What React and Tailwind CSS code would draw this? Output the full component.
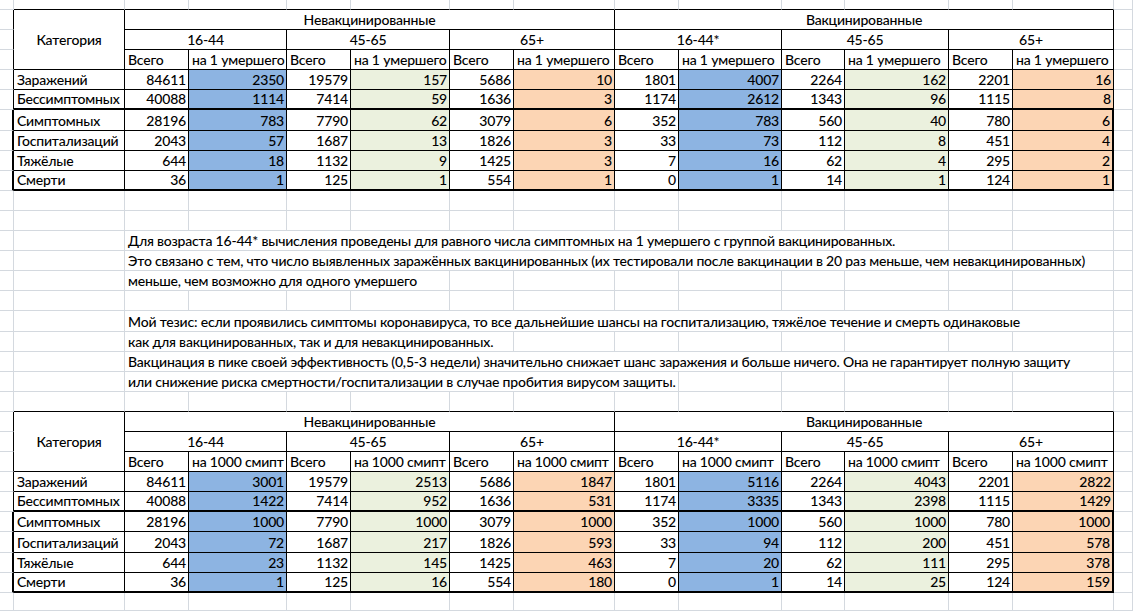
import React from 'react';

const GRID = 'border-[#d4d9df]';
const fills = ['bg-[#8db4e2]', 'bg-[#ebf1de]', 'bg-[#fcd5b4]'];

const labels = ['Заражений', 'Бессимптомных', 'Симптомных', 'Госпитализаций', 'Тяжёлые', 'Смерти'];

const perDeath = [
  [84611, 2350, 19579, 157, 5686, 10, 1801, 4007, 2264, 162, 2201, 16],
  [40088, 1114, 7414, 59, 1636, 3, 1174, 2612, 1343, 96, 1115, 8],
  [28196, 783, 7790, 62, 3079, 6, 352, 783, 560, 40, 780, 6],
  [2043, 57, 1687, 13, 1826, 3, 33, 73, 112, 8, 451, 4],
  [644, 18, 1132, 9, 1425, 3, 7, 16, 62, 4, 295, 2],
  [36, 1, 125, 1, 554, 1, 0, 1, 14, 1, 124, 1],
];

const perThousand = [
  [84611, 3001, 19579, 2513, 5686, 1847, 1801, 5116, 2264, 4043, 2201, 2822],
  [40088, 1422, 7414, 952, 1636, 531, 1174, 3335, 1343, 2398, 1115, 1429],
  [28196, 1000, 7790, 1000, 3079, 1000, 352, 1000, 560, 1000, 780, 1000],
  [2043, 72, 1687, 217, 1826, 593, 33, 94, 112, 200, 451, 578],
  [644, 23, 1132, 145, 1425, 463, 7, 20, 62, 111, 295, 378],
  [36, 1, 125, 16, 554, 180, 0, 1, 14, 25, 124, 159],
];

const ages = ['16-44', '45-65', '65+', '16-44*', '45-65', '65+'];

// text rows between the tables: [text, span class, cells left over after the span]
const notes = [
  null,
  null,
  ['Для возраста 16-44* вычисления проведены для равного числа симптомных на 1 умершего с группой вакцинированных.', 'col-span-10', 2],
  ['Это связано с тем, что число выявленных заражённых вакцинированных (их тестировали после вакцинации в 20 раз меньше, чем невакцинированных)', 'col-span-12', 0],
  ['меньше, чем возможно для одного умершего', 'col-span-4', 8],
  null,
  ['Мой тезис: если проявились симптомы коронавируса, то все дальнейшие шансы на госпитализацию, тяжёлое течение и смерть одинаковые', 'col-span-12', 0],
  ['как для вакцинированных, так и для невакцинированных.', 'col-span-5', 7],
  ['Вакцинация в пике своей эффективность (0,5-3 недели) значительно снижает шанс заражения и больше ничего. Она не гарантирует полную защиту', 'col-span-12', 0],
  ['или снижение риска смертности/госпитализации в случае пробития вирусом защиты.', 'col-span-7', 5],
  null,
];

const Gray = () => <div className={`border-r border-b ${GRID}`} />;

// a sheet row with nothing in it; `topOfTable` draws the table's top edge
const EmptyRow = ({ topOfTable }) => (
  <>
    <Gray />
    {Array.from({ length: 13 }, (_, i) =>
      topOfTable ? (
        <div key={i} className="border-r border-b border-r-[#d4d9df] border-b-black" />
      ) : (
        <Gray key={i} />
      )
    )}
    <Gray />
  </>
);

const NoteRow = ({ note }) => {
  if (!note) return <EmptyRow />;
  const [text, span, rest] = note;
  return (
    <>
      <Gray />
      <Gray />
      <div className={`${span} border-r border-b ${GRID} flex items-end pl-[3px] pb-[1px] whitespace-nowrap`}>
        {text}
      </div>
      {Array.from({ length: rest }, (_, i) => <Gray key={i} />)}
      <Gray />
    </>
  );
};

const Table = ({ unit, data }) => (
  <>
    {/* header row 1 */}
    <div className={`border-r border-b border-r-black border-b-[#d4d9df]`} />
    <div className="row-span-3 border-r border-b border-black flex items-center justify-center">Категория</div>
    <div className="col-span-6 border-r border-b border-black flex items-end justify-center pb-[1px]">Невакцинированные</div>
    <div className="col-span-6 border-r border-b border-black flex items-end justify-center pb-[1px]">Вакцинированные</div>
    <Gray />

    {/* header row 2 */}
    <div className={`border-r border-b border-r-black border-b-[#d4d9df]`} />
    {ages.map((a, i) => (
      <div key={i} className="col-span-2 border-r border-b border-black flex items-end justify-center pb-[1px]">
        {a}
      </div>
    ))}
    <Gray />

    {/* header row 3 */}
    <div className={`border-r border-b border-r-black border-b-[#d4d9df]`} />
    {ages.map((_, i) => (
      <React.Fragment key={i}>
        <div className="border-r border-b border-black flex items-end pl-[3px] pb-[1px] whitespace-nowrap">Всего</div>
        <div className="border-r border-b border-black flex items-end pl-[3px] pb-[1px] whitespace-nowrap">{unit}</div>
      </React.Fragment>
    ))}
    <Gray />

    {data.map((row, r) => {
      const bottom = r === 1 || r === 5 ? 'border-b-2' : 'border-b';
      const edge = r >= 2 ? 'border-r-2' : 'border-r';
      return (
        <React.Fragment key={r}>
          <div className={`${edge} border-b border-r-black border-b-[#d4d9df]`} />
          <div className={`border-r ${bottom} border-black flex items-end pl-[3px] pb-[1px] whitespace-nowrap`}>
            {labels[r]}
          </div>
          {row.map((v, i) => {
            const right = r >= 2 && i === 11 ? 'border-r-2' : 'border-r';
            const fill = i % 2 === 1 ? fills[Math.floor(i / 2) % 3] : 'bg-white';
            return (
              <div key={i} className={`${right} ${bottom} border-black ${fill} flex items-end justify-end pr-[2px] pb-[1px]`}>
                {v}
              </div>
            );
          })}
          <Gray />
        </React.Fragment>
      );
    })}
  </>
);

export default function App() {
  return (
    <div className="w-[1133px] h-[611px] overflow-hidden bg-white text-black font-[Lato,'Noto_Sans',sans-serif] font-medium text-[14px] tracking-[-0.19px] leading-[16px]">
      <div className="grid h-full grid-cols-[14px_111px_64px_98px_64px_99px_64px_101px_64px_103px_63px_104px_64px_101px_1fr] grid-rows-[10px_repeat(29,20.1px)_1fr]">
        <EmptyRow topOfTable />
        <Table unit="на 1 умершего" data={perDeath} />
        {notes.map((n, i) =>
          i === notes.length - 1 ? <EmptyRow key={i} topOfTable /> : <NoteRow key={i} note={n} />
        )}
        <Table unit="на 1000 смипт" data={perThousand} />
        <EmptyRow />
      </div>
    </div>
  );
}
